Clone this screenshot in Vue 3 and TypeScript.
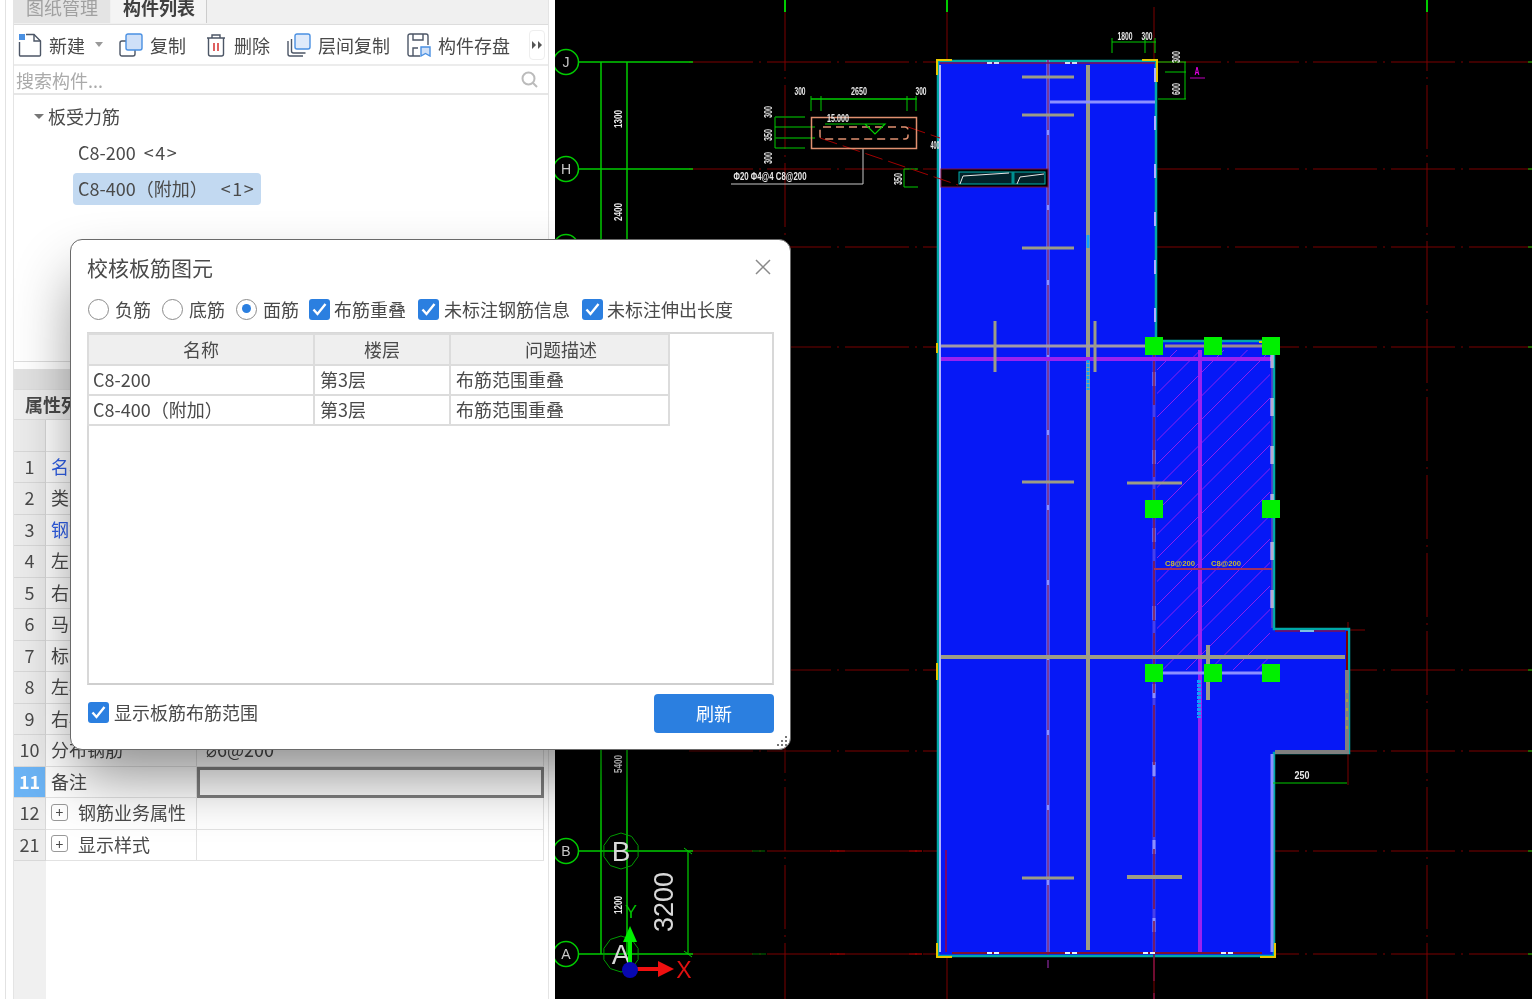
<script setup lang="ts">
interface Seg {
  x1: number;
  y1: number;
  x2: number;
  y2: number;
  c: string;
  w?: number;
  d?: string;
}

interface Label {
  x: number;
  y: number;
  t: string;
  s?: number;
  r?: boolean;
  c?: string;
  l?: number;
}

const propRows = [
  { no: 1, name: '名称', blue: true },
  { no: 2, name: '类别' },
  { no: 3, name: '钢筋信息', blue: true },
  { no: 4, name: '左弯折(mm)' },
  { no: 5, name: '右弯折(mm)' },
  { no: 6, name: '马凳筋排数' },
  { no: 7, name: '标注长度位置' },
  { no: 8, name: '左标注(mm)' },
  { no: 9, name: '右标注(mm)' },
  { no: 10, name: '分布钢筋', value: '⌀6@200' },
  { no: 11, name: '备注', active: true },
  { no: 12, name: '钢筋业务属性', group: true },
  { no: 21, name: '显示样式', group: true }
];

const tableRows = [
  { name: 'C8-200', floor: '第3层', desc: '布筋范围重叠' },
  { name: 'C8-400（附加）', floor: '第3层', desc: '布筋范围重叠' }
];

const RED = '#7c0000';
const GREEN = '#00cc00';
const GRAY = '#9c9c86';
const LAV = '#8c90ff';
const PURPLE = '#9a22f0';

const gridY = [62, 169, 247, 347, 670, 751, 851, 954];
const dash = '64 6 2 6';

const gridLines: Seg[] = [
  ...gridY.map((y) => ({ x1: 689, y1: y, x2: 1532, y2: y, c: RED, d: dash })),
  ...[785, 947, 1154, 1427].map((x) => ({ x1: x, y1: 7, x2: x, y2: 999, c: RED, d: dash })),
  { x1: 1348, y1: 622, x2: 1348, y2: 785, c: RED },
  { x1: 1348, y1: 630, x2: 1365, y2: 630, c: RED }
];

const accents: Seg[] = [
  ...[785, 947, 1427].map((x) => ({ x1: x, y1: 0, x2: x, y2: 12, c: GREEN, w: 2 })),
  ...gridY.map((y) => ({ x1: 1528, y1: y, x2: 1532, y2: y, c: GREEN })),
  { x1: 752, y1: 851, x2: 765, y2: 851, c: '#007000' },
  { x1: 752, y1: 954, x2: 766, y2: 954, c: '#007000' },
  { x1: 830, y1: 851, x2: 845, y2: 851, c: '#d00000' },
  { x1: 830, y1: 954, x2: 845, y2: 954, c: '#d00000' },
  { x1: 909, y1: 851, x2: 922, y2: 851, c: '#d00000' },
  { x1: 909, y1: 954, x2: 922, y2: 954, c: '#d00000' }
];

const axisLines: Seg[] = [
  ...[62, 169, 851, 954].map((y) => ({ x1: 579, y1: y, x2: 693, y2: y, c: GREEN, w: 1.5 })),
  { x1: 601, y1: 62, x2: 601, y2: 954, c: GREEN, w: 1.5 },
  { x1: 627, y1: 62, x2: 627, y2: 954, c: GREEN, w: 1.5 },
  { x1: 688, y1: 851, x2: 688, y2: 954, c: '#00a800', w: 1.5 },
  { x1: 684, y1: 848, x2: 692, y2: 854, c: GREEN },
  { x1: 684, y1: 951, x2: 692, y2: 957, c: GREEN }
];

const dimLines: Seg[] = [
  { x1: 811, y1: 99, x2: 917, y2: 99, c: GREEN, w: 1.5 },
  ...[811, 821, 907, 916].map((x) => ({ x1: x, y1: 96, x2: x, y2: 111, c: GREEN })),
  { x1: 775, y1: 117, x2: 775, y2: 148, c: GREEN },
  { x1: 775, y1: 117, x2: 805, y2: 117, c: '#009000', w: 1.5 },
  { x1: 775, y1: 127, x2: 815, y2: 127, c: GREEN },
  { x1: 775, y1: 138, x2: 815, y2: 138, c: '#009000', w: 1.5 },
  { x1: 775, y1: 148, x2: 805, y2: 148, c: GREEN },
  { x1: 1112, y1: 42, x2: 1156, y2: 42, c: GREEN },
  ...[1112, 1145, 1155].map((x) => ({ x1: x, y1: 38, x2: x, y2: 53, c: GREEN })),
  { x1: 1158, y1: 62, x2: 1186, y2: 62, c: GREEN },
  { x1: 1165, y1: 72, x2: 1186, y2: 72, c: GREEN },
  { x1: 1158, y1: 99, x2: 1186, y2: 99, c: GREEN },
  { x1: 1185, y1: 62, x2: 1185, y2: 99, c: GREEN },
  { x1: 904, y1: 169, x2: 904, y2: 187, c: GREEN },
  { x1: 904, y1: 169, x2: 918, y2: 169, c: GREEN },
  { x1: 904, y1: 187, x2: 918, y2: 187, c: GREEN },
  { x1: 1273, y1: 783, x2: 1347, y2: 783, c: GREEN },
  { x1: 1190, y1: 78, x2: 1205, y2: 78, c: '#c000c0' },
  { x1: 863, y1: 148, x2: 863, y2: 184, c: '#c8c8c8' },
  { x1: 731, y1: 184, x2: 863, y2: 184, c: '#c8c8c8' },
  { x1: 820, y1: 138, x2: 958, y2: 185, c: '#a00000', d: '18 6' },
  { x1: 908, y1: 127, x2: 940, y2: 138, c: '#a00000', d: '18 6' }
];

// diagonal hatch of the checked area
const hatchLines: Seg[] = Array.from({ length: 28 }, (_, i) => {
  const start = 372 + i * 23.5;
  return { x1: 1155, y1: start, x2: 1155 + 340, y2: start - 340, c: '#8a20f0' };
});

const buildingLines: Seg[] = [
  { x1: 1048, y1: 60, x2: 1048, y2: 952, c: LAV, w: 3 },
  { x1: 1048, y1: 60, x2: 1048, y2: 968, c: '#702080', w: 1.5, d: '70 5' },
  { x1: 1154, y1: 345, x2: 1154, y2: 952, c: '#4a40e8', w: 3 },
  { x1: 1154, y1: 372, x2: 1154, y2: 952, c: LAV, w: 3, d: '14 64' },
  { x1: 1154, y1: 345, x2: 1154, y2: 999, c: '#801040', w: 1.5, d: '60 12' },
  { x1: 1088, y1: 65, x2: 1088, y2: 950, c: GRAY, w: 4 },
  { x1: 1200, y1: 350, x2: 1200, y2: 952, c: PURPLE, w: 4 },
  { x1: 940, y1: 359, x2: 1272, y2: 359, c: PURPLE, w: 4 },
  { x1: 940, y1: 346, x2: 1150, y2: 346, c: '#a098a8', w: 3 },
  { x1: 1165, y1: 346, x2: 1270, y2: 346, c: '#9a8890', w: 3 },
  { x1: 940, y1: 657, x2: 1345, y2: 657, c: GRAY, w: 4 },
  { x1: 1050, y1: 102, x2: 1155, y2: 102, c: LAV, w: 3 },
  { x1: 1160, y1: 673, x2: 1265, y2: 673, c: LAV, w: 3 },
  { x1: 1022, y1: 77, x2: 1074, y2: 77, c: GRAY, w: 3 },
  { x1: 1022, y1: 115, x2: 1074, y2: 115, c: GRAY, w: 3 },
  { x1: 1022, y1: 248, x2: 1074, y2: 248, c: GRAY, w: 3 },
  { x1: 1022, y1: 482, x2: 1074, y2: 482, c: GRAY, w: 3 },
  { x1: 1022, y1: 878, x2: 1074, y2: 878, c: GRAY, w: 3 },
  { x1: 1127, y1: 483, x2: 1182, y2: 483, c: GRAY, w: 3 },
  { x1: 1127, y1: 877, x2: 1182, y2: 877, c: GRAY, w: 4 },
  { x1: 995, y1: 321, x2: 995, y2: 372, c: GRAY, w: 3 },
  { x1: 1095, y1: 321, x2: 1095, y2: 372, c: GRAY, w: 3 },
  { x1: 1208, y1: 645, x2: 1208, y2: 700, c: GRAY, w: 4 },
  { x1: 1199, y1: 680, x2: 1199, y2: 718, c: '#10a0ff', w: 4, d: '3 1' },
  { x1: 1088, y1: 235, x2: 1088, y2: 248, c: '#10a0ff', w: 3 },
  { x1: 1088, y1: 360, x2: 1088, y2: 390, c: '#10a0ff', w: 3, d: '3 1' },
  { x1: 1154, y1: 569, x2: 1272, y2: 569, c: '#a03060', w: 2 },
  { x1: 1272, y1: 350, x2: 1272, y2: 628, c: '#e8e8ff', w: 3, d: '18 30' },
  { x1: 1272, y1: 350, x2: 1272, y2: 628, c: '#8a60a0', w: 1 },
  { x1: 1272, y1: 754, x2: 1272, y2: 952, c: LAV, w: 3 },
  { x1: 1155, y1: 68, x2: 1155, y2: 338, c: '#b0b0ff', w: 2, d: '14 34' },
  { x1: 940, y1: 65, x2: 940, y2: 952, c: '#b0b4ff', w: 2 },
  { x1: 940, y1: 63, x2: 1155, y2: 63, c: '#801050', w: 1.5 },
  { x1: 952, y1: 953, x2: 1262, y2: 953, c: '#801030', w: 2 },
  { x1: 946, y1: 850, x2: 946, y2: 952, c: '#a00040', w: 1.5 },
  { x1: 987, y1: 953, x2: 1000, y2: 953, c: '#f0f0f0', w: 2, d: '5 2' },
  { x1: 1065, y1: 953, x2: 1078, y2: 953, c: '#f0f0f0', w: 2, d: '5 2' },
  { x1: 1143, y1: 953, x2: 1156, y2: 953, c: '#f0f0f0', w: 2, d: '5 2' },
  { x1: 1221, y1: 953, x2: 1234, y2: 953, c: '#f0f0f0', w: 2, d: '5 2' },
  { x1: 987, y1: 63, x2: 1000, y2: 63, c: '#d8d8f0', w: 2, d: '5 2' },
  { x1: 1065, y1: 63, x2: 1078, y2: 63, c: '#d8d8f0', w: 2, d: '5 2' },
  { x1: 1275, y1: 752, x2: 1349, y2: 752, c: '#808080', w: 4 },
  { x1: 1347, y1: 670, x2: 1347, y2: 752, c: '#808080', w: 4 },
  { x1: 1347, y1: 631, x2: 1347, y2: 670, c: RED, w: 2 },
  { x1: 1347, y1: 690, x2: 1347, y2: 735, c: '#d0c000', w: 1, d: '3 6' },
  { x1: 1275, y1: 631, x2: 1345, y2: 631, c: '#801050', w: 1.5 },
  { x1: 1300, y1: 631, x2: 1314, y2: 631, c: '#80c0e0', w: 2 }
];

const yellowCorners = [
  '937,75 937,60 952,60',
  '1142,60 1157,60 1157,82',
  '937,343 937,353',
  '937,663 937,680',
  '937,943 937,957 952,957',
  '1260,957 1275,957 1275,943',
  '1259,342 1272,342 1272,350'
];

const markers: [number, number][] = [
  [1154, 346],
  [1213, 346],
  [1271, 346],
  [1154, 509],
  [1271, 509],
  [1154, 673],
  [1213, 673],
  [1271, 673]
];

const labels: Label[] = [
  { x: 619, y: 119, t: '1300', r: true, l: 18 },
  { x: 619, y: 212, t: '2400', r: true, l: 18 },
  { x: 619, y: 764, t: '5400', r: true, l: 18 },
  { x: 619, y: 905, t: '1200', r: true, l: 18 },
  { x: 800, y: 92, t: '300', l: 11 },
  { x: 859, y: 92, t: '2650', l: 16 },
  { x: 921, y: 92, t: '300', l: 11 },
  { x: 769, y: 112, t: '300', r: true, l: 12 },
  { x: 769, y: 135, t: '350', r: true, l: 12 },
  { x: 769, y: 158, t: '300', r: true, l: 12 },
  { x: 838, y: 119, t: '15.000', l: 22 },
  { x: 770, y: 177, t: 'Φ20 Φ4@4 C8@200', l: 73 },
  { x: 935, y: 146, t: '400', l: 9 },
  { x: 899, y: 179, t: '350', r: true, l: 12 },
  { x: 1125, y: 37, t: '1800', l: 15 },
  { x: 1147, y: 37, t: '300', l: 11 },
  { x: 1177, y: 57, t: '300', r: true, l: 12 },
  { x: 1177, y: 89, t: '600', r: true, l: 12 },
  { x: 1302, y: 776, t: '250', l: 15 },
  { x: 1197, y: 72, t: 'A', l: 5, c: '#e000e0' },
  { x: 1180, y: 563, t: 'C8@200', s: 7, l: 30, c: '#c8b830' },
  { x: 1226, y: 563, t: 'C8@200', s: 7, l: 30, c: '#c8b830' }
];

const axisBubbles = [
  { x: 566, y: 62, t: 'J' },
  { x: 566, y: 169, t: 'H' },
  { x: 566, y: 247, t: '' },
  { x: 566, y: 851, t: 'B' },
  { x: 566, y: 954, t: 'A' }
];

const octagon = (cx: number, cy: number, r: number) =>
  Array.from({ length: 10 }, (_, i) => {
    const a = ((i + 0.5) * Math.PI) / 5;
    return `${(cx + r * Math.cos(a)).toFixed(1)},${(cy + r * Math.sin(a)).toFixed(1)}`;
  }).join(' ');
</script>

<template>
  <div class="app">
    <aside class="sidebar">
      <div class="edge"></div>
      <div class="panel-col">
        <div class="tabs">
          <div class="tab">图纸管理</div>
          <div class="tab current">构件列表</div>
        </div>

        <div class="toolbar">
          <div class="tool first">
            <svg width="24" height="24" viewBox="0 0 24 24" fill="none" stroke="#4c5666" stroke-width="1.4">
              <path d="M8 1.5h8l6.5 6.5v14a1 1 0 0 1-1 1H2.500a1 1 0 0 1-1-1V9" />
              <path d="M16 1.500V8h6.500" />
              <rect x="1" y="1" width="6" height="6" fill="#4a90e2" stroke="none" />
            </svg>
            <span>新建</span>
            <i class="caret"></i>
          </div>
          <div class="tool">
            <svg width="24" height="24" viewBox="0 0 24 24" fill="none" stroke-width="1.4">
              <rect x="1" y="8" width="15" height="15" rx="2" stroke="#4c5666" />
              <rect x="7" y="1" width="16" height="16" rx="2" fill="#cfe0f8" stroke="#4a90e2" />
            </svg>
            <span>复制</span>
          </div>
          <div class="tool">
            <svg width="22" height="24" viewBox="0 0 22 24" fill="none" stroke="#4c5666" stroke-width="1.4">
              <path d="M2 5h18M7 5V2h8v3M3.500 5v16a2 2 0 0 0 2 2h11a2 2 0 0 0 2-2V5" />
              <path d="M9 10v8M13 10v8" stroke="#d83a3a" stroke-width="1.600" />
            </svg>
            <span>删除</span>
          </div>
          <div class="tool">
            <svg width="24" height="24" viewBox="0 0 24 24" fill="none" stroke-width="1.4">
              <path d="M1 8v13a2 2 0 0 0 2 2h13" stroke="#4c5666" />
              <path d="M4.500 6v12a2 2 0 0 0 2 2h12" stroke="#4c5666" />
              <rect x="8" y="1" width="15" height="15" rx="2" fill="#dfeafa" stroke="#4a90e2" />
            </svg>
            <span>层间复制</span>
          </div>
          <div class="tool">
            <svg width="24" height="24" viewBox="0 0 24 24" fill="none" stroke="#4c5666" stroke-width="1.4">
              <path d="M13 23H3a2 2 0 0 1-2-2V3a2 2 0 0 1 2-2h16a2 2 0 0 1 2 2v9" />
              <path d="M6 1v6h10V1M6 23v-8h5" />
              <path d="M14 14h9v9l-4.500-2.500L14 23z" fill="#cfe0f8" stroke="#4a90e2" />
            </svg>
            <span>构件存盘</span>
          </div>
          <div class="more">
            <svg width="10" height="8" viewBox="0 0 10 8" fill="#555">
              <path d="M0 0l4 4-4 4zM6 0l4 4-4 4z" />
            </svg>
          </div>
        </div>

        <div class="search">
          <span>搜索构件...</span>
          <svg width="17" height="17" viewBox="0 0 17 17" fill="none" stroke="#bbb" stroke-width="2">
            <circle cx="7.500" cy="7.500" r="6" />
            <path d="M12 12l4 4" />
          </svg>
        </div>

        <div class="tree">
          <div class="tree-root"><i class="caret dark"></i>板受力筋</div>
          <div class="tree-leaf">C8-200 <span class="count">&lt;4&gt;</span></div>
          <div class="tree-leaf selected">C8-400（附加） <span class="count">&lt;1&gt;</span></div>
        </div>

        <div class="prop-strip"></div>
        <div class="prop-tab"><b>属性列表</b></div>
        <div class="props">
          <div class="cell no"></div>
          <div class="cell"></div>
          <div class="cell"></div>
          <template v-for="row in propRows" :key="row.no">
            <div class="cell no" :class="{ active: row.active }">{{ row.no }}</div>
            <div class="cell name" :class="{ blue: row.blue }">
              <i v-if="row.group" class="plus">+</i>{{ row.name }}
            </div>
            <div class="cell value" :class="{ editing: row.active }">{{ row.value }}</div>
          </template>
        </div>
        <div class="no-fill"></div>
      </div>
    </aside>

    <main class="canvas">
      <svg class="drawing" width="977" height="999" viewBox="555 0 977 999" font-family="Liberation Sans, sans-serif">
        <line v-for="(l, i) in gridLines" :key="'g' + i" :x1="l.x1" :y1="l.y1" :x2="l.x2" :y2="l.y2" :stroke="l.c" :stroke-dasharray="l.d" />

        <polygon
          points="938,61 1156,61 1156,341 1274,341 1274,629 1349,629 1349,753 1274,753 1274,956 938,956"
          fill="#0618f6"
          stroke="#00a8a8"
          stroke-width="2.500"
        />
        <defs>
          <clipPath id="hatch-clip">
            <rect x="1157" y="350" width="113" height="320" />
          </clipPath>
        </defs>
        <g clip-path="url(#hatch-clip)">
          <line v-for="(l, i) in hatchLines" :key="'h' + i" :x1="l.x1" :y1="l.y1" :x2="l.x2" :y2="l.y2" :stroke="l.c" />
        </g>
        <line v-for="(l, i) in buildingLines" :key="'b' + i" :x1="l.x1" :y1="l.y1" :x2="l.x2" :y2="l.y2" :stroke="l.c" :stroke-width="l.w" :stroke-dasharray="l.d" />
        <polyline v-for="(p, i) in yellowCorners" :key="'y' + i" :points="p" fill="none" stroke="#e8c800" stroke-width="2" />

        <rect x="941" y="169" width="107" height="18" fill="#000" stroke="#7c1040" />
        <rect x="959" y="172" width="86" height="12" fill="#02222a" stroke="#00b0b0" />
        <line x1="1013" y1="172" x2="1013" y2="184" stroke="#009090" stroke-width="3" />
        <path d="M960 184l3-8 46-3M1017 184l3-7 24-3" fill="none" stroke="#e8e8e8" />

        <rect v-for="(m, i) in markers" :key="'m' + i" :x="m[0] - 9" :y="m[1] - 9" width="18" height="18" fill="#00f000" />

        <line v-for="(l, i) in accents" :key="'a' + i" :x1="l.x1" :y1="l.y1" :x2="l.x2" :y2="l.y2" :stroke="l.c" :stroke-width="l.w" />
        <line v-for="(l, i) in axisLines" :key="'x' + i" :x1="l.x1" :y1="l.y1" :x2="l.x2" :y2="l.y2" :stroke="l.c" :stroke-width="l.w" />
        <line v-for="(l, i) in dimLines" :key="'d' + i" :x1="l.x1" :y1="l.y1" :x2="l.x2" :y2="l.y2" :stroke="l.c" :stroke-width="l.w" :stroke-dasharray="l.d" />

        <rect x="811.500" y="117.500" width="105" height="31" fill="none" stroke="#e09070" stroke-width="1.500" />
        <rect x="820" y="127" width="88" height="12" rx="3" fill="none" stroke="#e09070" stroke-width="1.500" stroke-dasharray="8 5" />
        <path d="M825 124h60l-10 10-10-10" fill="none" stroke="#00d000" stroke-width="1.200" />

        <g v-for="b in axisBubbles" :key="b.y">
          <circle :cx="b.x" :cy="b.y" r="12.500" fill="#000" stroke="#00cc00" stroke-width="1.500" />
          <text :x="b.x" :y="b.y + 5" text-anchor="middle" font-size="14" fill="#c8c8c8">{{ b.t }}</text>
        </g>
        <polygon :points="octagon(621, 851, 18)" fill="none" stroke="#009a00" />
        <polygon :points="octagon(621, 954, 18)" fill="none" stroke="#009a00" />
        <text x="621" y="861" text-anchor="middle" font-size="28" fill="#d8d8d8">B</text>
        <text x="621" y="964" text-anchor="middle" font-size="28" fill="#d8d8d8">A</text>
        <text x="663" y="912" text-anchor="middle" font-size="27" fill="#d8d8d8" transform="rotate(-90 663 902)">3200</text>

        <template v-for="(t, i) in labels" :key="'t' + i">
          <text
            :x="t.x"
            :y="t.y + 3"
            text-anchor="middle"
            :font-size="t.s || 10"
            font-weight="700"
            :fill="t.c || '#e8e8e8'"
            :textLength="t.l"
            lengthAdjust="spacingAndGlyphs"
            :transform="t.r ? `rotate(-90 ${t.x} ${t.y})` : undefined"
          >{{ t.t }}</text>
        </template>

        <path d="M628 964v-22h-5l7-16 7 16h-5v22z" fill="#00f000" />
        <path d="M636 967h22v-6l16 8-16 8v-6h-22z" fill="#f01010" />
        <circle cx="630" cy="970" r="8" fill="#0808b0" />
        <text x="631" y="918" text-anchor="middle" font-size="18" fill="#00c000">Y</text>
        <text x="684" y="978" text-anchor="middle" font-size="23" fill="#e01010">X</text>
      </svg>
    </main>

    <section class="dialog">
      <header class="dialog-title">
        <span>校核板筋图元</span>
        <svg width="16" height="16" viewBox="0 0 16 16" stroke="#8a8a8a" stroke-width="1.500">
          <path d="M1 1l14 14M15 1L1 15" />
        </svg>
      </header>

      <div class="options">
        <label class="opt"><i class="radio"></i>负筋</label>
        <label class="opt"><i class="radio"></i>底筋</label>
        <label class="opt"><i class="radio on"></i>面筋</label>
        <label class="opt tight">
          <i class="check"><svg width="15" height="13" viewBox="0 0 15 13" fill="none" stroke="#fff" stroke-width="2.400"><path d="M1.500 6.500l4 4.500 8-10" /></svg></i>布筋重叠
        </label>
        <label class="opt tight">
          <i class="check"><svg width="15" height="13" viewBox="0 0 15 13" fill="none" stroke="#fff" stroke-width="2.400"><path d="M1.500 6.500l4 4.500 8-10" /></svg></i>未标注钢筋信息
        </label>
        <label class="opt tight">
          <i class="check"><svg width="15" height="13" viewBox="0 0 15 13" fill="none" stroke="#fff" stroke-width="2.400"><path d="M1.500 6.500l4 4.500 8-10" /></svg></i>未标注伸出长度
        </label>
      </div>

      <div class="table-frame">
        <table>
          <colgroup>
            <col class="col-name" />
            <col class="col-floor" />
            <col class="col-desc" />
          </colgroup>
          <thead>
            <tr>
              <th>名称</th>
              <th>楼层</th>
              <th>问题描述</th>
            </tr>
          </thead>
          <tbody>
            <tr v-for="row in tableRows" :key="row.name">
              <td>{{ row.name }}</td>
              <td>{{ row.floor }}</td>
              <td>{{ row.desc }}</td>
            </tr>
          </tbody>
        </table>
      </div>

      <footer class="dialog-foot">
        <label class="opt foot-check">
          <i class="check"><svg width="15" height="13" viewBox="0 0 15 13" fill="none" stroke="#fff" stroke-width="2.400"><path d="M1.500 6.500l4 4.500 8-10" /></svg></i>显示板筋布筋范围
        </label>
        <button class="refresh" type="button">刷新</button>
      </footer>

      <svg class="grip" width="12" height="12" viewBox="0 0 12 12" fill="#777">
        <rect x="9" y="1" width="2" height="2" />
        <rect x="5" y="5" width="2" height="2" />
        <rect x="9" y="5" width="2" height="2" />
        <rect x="1" y="9" width="2" height="2" />
        <rect x="5" y="9" width="2" height="2" />
        <rect x="9" y="9" width="2" height="2" />
      </svg>
    </section>
  </div>
</template>

<style>
html,
body {
  margin: 0;
  background: #fff;
}
</style>

<style scoped>
.app {
  position: relative;
  display: flex;
  width: 1532px;
  height: 999px;
  overflow: hidden;
  font-family: "Noto Sans CJK SC", "Noto Sans", sans-serif;
  font-size: 18px;
  color: #4a4a4a;
  filter: blur(0.45px);
}

.sidebar {
  display: flex;
  flex: 0 0 555px;
  background: #fff;
}

.edge {
  flex: 0 0 6px;
  border-right: 1px solid #e2e2e2;
  box-sizing: border-box;
}

.panel-col {
  display: flex;
  flex-direction: column;
  width: 536px;
  margin-left: 7px;
  border-right: 1px solid #e4e4e4;
  border-left: 1px solid #e4e4e4;
  box-sizing: border-box;
}

.tabs {
  display: flex;
  height: 24px;
  flex: none;
  overflow: hidden;
  background: #f0f0f0;
  border-bottom: 1px solid #ddd;
}

.tab {
  width: 96px;
  height: 26px;
  margin-top: -3px;
  line-height: 20px;
  text-align: center;
  color: #a0a0a0;
  background: #e4e4e4;
}

.tab.current {
  margin-left: 1px;
  color: #404040;
  font-weight: 700;
  background: #f4f4f4;
  box-shadow: inset -1px 0 #ccc;
}

.toolbar {
  display: flex;
  align-items: center;
  flex: none;
  height: 41px;
  padding-left: 4px;
  border-bottom: 2px solid #ececec;
  box-sizing: border-box;
}

.tool {
  display: flex;
  align-items: center;
  gap: 7px;
}

.tool.first {
  margin-right: 16px;
}

.tool:nth-child(3) {
  margin-left: 19px;
}

.tool:nth-child(4) {
  margin-left: 17px;
}

.tool:nth-child(5) {
  margin-left: 17px;
}

.caret {
  display: block;
  width: 0;
  height: 0;
  margin-left: 3px;
  border-top: 5px solid #999;
  border-right: 4px solid transparent;
  border-left: 4px solid transparent;
}

.more {
  display: flex;
  align-items: center;
  justify-content: center;
  width: 16px;
  height: 30px;
  margin-left: 19px;
  border: 1px solid #eee;
  border-radius: 4px;
  box-sizing: border-box;
}

.search {
  display: flex;
  align-items: center;
  justify-content: space-between;
  flex: none;
  height: 29px;
  padding: 0 10px 0 2px;
  color: #aaa;
  border-bottom: 2px solid #e6e6e6;
  box-sizing: border-box;
}

.tree {
  flex: none;
  height: 267px;
  padding-top: 2px;
  border-bottom: 1px solid #ddd;
  box-sizing: border-box;
}

.tree-root {
  display: flex;
  align-items: center;
  height: 38px;
  margin-bottom: 2px;
  padding-left: 20px;
}

.caret.dark {
  margin: 0 4px 0 0;
  border-top-color: #777;
  border-right-width: 5px;
  border-left-width: 5px;
}

.tree-leaf {
  display: flex;
  align-items: center;
  width: 188px;
  height: 32px;
  margin: 0 0 4px 59px;
  padding: 0 0 2px 5px;
  border-radius: 4px;
  box-sizing: border-box;
}

.tree-leaf.selected {
  background: #c2d9f1;
}

.count {
  margin-left: 8px;
  letter-spacing: 1.5px;
}

.tree-leaf.selected .count {
  margin-left: 13px;
}

.prop-strip {
  flex: none;
  height: 20px;
  margin-top: 7px;
  background: #e2e2e2;
}

.prop-tab {
  flex: none;
  height: 31px;
  padding-left: 11px;
  line-height: 28px;
  background: #efefef;
  border-top: 1px solid #ddd;
  border-bottom: 1px solid #ddd;
  box-sizing: border-box;
}

.props {
  display: grid;
  flex: none;
  grid-template-columns: 32px 151px 347px;
  grid-auto-rows: 31.5px;
  width: 530px;
}

.cell {
  display: flex;
  align-items: center;
  padding: 0 0 2px 5px;
  overflow: hidden;
  white-space: nowrap;
  border-right: 1px solid #e2e2e2;
  border-bottom: 1px solid #e2e2e2;
  box-sizing: border-box;
}

.cell.no {
  justify-content: center;
  padding-left: 0;
  background: #ececec;
  border-color: #d8d8d8;
}

.cell.no.active {
  color: #fff;
  font-weight: 700;
  background: #6cb4f5;
}

.cell.blue {
  color: #2f5fe8;
}

.cell.value {
  padding-left: 9px;
}

.cell.editing {
  border: 3px solid #808080;
}

.plus {
  display: flex;
  align-items: center;
  justify-content: center;
  width: 17px;
  height: 17px;
  margin-right: 10px;
  font-size: 14px;
  font-style: normal;
  line-height: 1;
  border: 1px solid #999;
  border-radius: 3px;
  box-sizing: border-box;
}

.no-fill {
  flex: 1;
  width: 32px;
  background: #f0f0f0;
}

.canvas {
  flex: 1;
  background: #000;
}

.drawing {
  display: block;
}

.dialog {
  position: absolute;
  top: 239px;
  left: 70px;
  display: flex;
  flex-direction: column;
  width: 721px;
  height: 511px;
  padding: 0 16px;
  background: #fff;
  border: 1px solid #6a6a6a;
  border-radius: 12px;
  box-shadow: 0 32px 60px -6px rgba(0, 0, 0, 0.45);
  box-sizing: border-box;
}

.dialog-title {
  display: flex;
  align-items: center;
  justify-content: space-between;
  flex: none;
  height: 53px;
  margin-bottom: 4px;
  font-size: 21px;
}

.dialog-title svg {
  margin-right: 3px;
}

.options {
  display: flex;
  align-items: center;
  flex: none;
  gap: 11px;
  height: 26px;
  margin-left: 1px;
  padding-bottom: 2px;
  box-sizing: border-box;
}

.opt {
  display: flex;
  align-items: center;
  gap: 6px;
  white-space: nowrap;
}

.opt.tight {
  gap: 4px;
}

.options .tight:nth-child(4) {
  margin-left: -1px;
}

.options .tight:nth-child(5) {
  gap: 5px;
  margin-left: 1px;
}

.options .tight:nth-child(6) {
  margin-left: 1px;
}

.radio {
  display: block;
  position: relative;
  width: 21px;
  height: 21px;
  border: 1.5px solid #8c8c8c;
  border-radius: 50%;
  box-sizing: border-box;
}

.radio.on::after {
  content: "";
  position: absolute;
  top: 4.500px;
  left: 4.500px;
  width: 9px;
  height: 9px;
  background: #2b7fe0;
  border-radius: 50%;
}

.check {
  display: flex;
  align-items: center;
  justify-content: center;
  width: 21px;
  height: 21px;
  background: #2b7fe0;
  border-radius: 3px;
}

.table-frame {
  flex: none;
  height: 353px;
  margin-top: 9px;
  border: 2px solid #d8d8d8;
  border-bottom-color: #cfcfcf;
  box-sizing: border-box;
}

table {
  width: 581px;
  margin: -1px 0 0 -2px;
  table-layout: fixed;
  border-collapse: collapse;
}

.col-name {
  width: 226px;
}

.col-floor {
  width: 136px;
}

.col-desc {
  width: 219px;
}

th,
td {
  height: 30px;
  padding: 0 0 2px 5px;
  font-weight: 400;
  text-align: left;
  border: 2px solid #dcdcdc;
  box-sizing: border-box;
}

td:first-child {
  padding-left: 4px;
}

th {
  height: 31px;
  padding: 0 0 2px;
  text-align: center;
  background: #efefef;
}

th:nth-child(3) {
  padding-left: 3px;
}

.dialog-foot {
  display: flex;
  align-items: center;
  justify-content: space-between;
  flex: none;
  height: 39px;
  margin-top: 9px;
  padding-left: 1px;
}

.foot-check {
  gap: 5px;
  margin-bottom: 3px;
}

.refresh {
  width: 120px;
  height: 39px;
  padding: 0 0 2px;
  font: inherit;
  color: #fff;
  background: #2b7fe0;
  border: 0;
  border-radius: 4px;
}

.grip {
  position: absolute;
  right: 2px;
  bottom: 2px;
}
</style>
